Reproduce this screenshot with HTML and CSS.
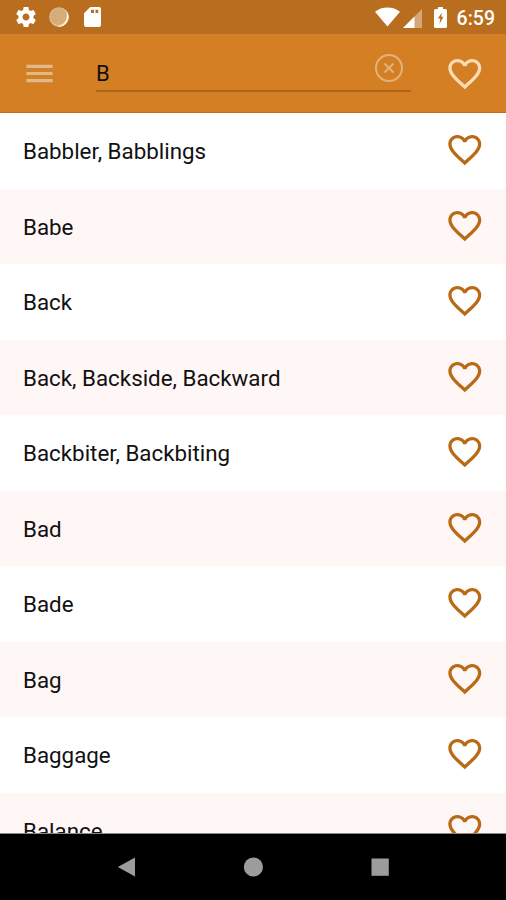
FILE: index.html
```
<!DOCTYPE html>
<html lang="en">
<head>
<meta charset="utf-8">
<title>Dictionary</title>
<link rel="stylesheet" href="styles.css">
</head>
<body>
<svg class="defs" width="0" height="0" aria-hidden="true">
  <symbol id="heart" viewBox="0 0 24 24"><path d="M16.5 3c-1.74 0-3.41.81-4.5 2.09C10.91 3.81 9.24 3 7.5 3 4.42 3 2 5.42 2 8.5c0 3.78 3.4 6.86 8.55 11.54L12 21.35l1.45-1.32C18.6 15.36 22 12.28 22 8.5 22 5.42 19.58 3 16.5 3zm-4.4 15.55l-.1.1-.1-.1C7.14 14.24 4 11.39 4 8.5 4 6.5 5.5 5 7.5 5c1.54 0 3.04.99 3.57 2.36h1.87C13.46 5.99 14.96 5 16.5 5c2 0 3.5 1.5 3.5 3.5 0 2.89-3.14 5.74-7.9 10.05z"/></symbol>
</svg>
<div class="screen">
  <div class="status">
    <div class="status-left">
      <svg width="24" height="24" viewBox="0 0 24 24"><path d="M19.43 12.98c.04-.32.07-.64.07-.98s-.03-.66-.07-.98l2.11-1.65c.19-.15.24-.42.12-.64l-2-3.46c-.12-.22-.39-.3-.61-.22l-2.49 1c-.52-.4-1.08-.73-1.69-.98l-.38-2.65C14.46 2.18 14.25 2 14 2h-4c-.25 0-.46.18-.49.42l-.38 2.65c-.61.25-1.17.59-1.69.98l-2.49-1c-.23-.09-.49 0-.61.22l-2 3.46c-.13.22-.07.49.12.64l2.11 1.65c-.04.32-.07.65-.07.98s.03.66.07.98l-2.11 1.65c-.19.15-.24.42-.12.64l2 3.46c.12.22.39.3.61.22l2.49-1c.52.4 1.08.73 1.69.98l.38 2.65c.03.24.24.42.49.42h4c.25 0 .46-.18.49-.42l.38-2.65c.61-.25 1.17-.59 1.69-.98l2.49 1c.23.09.49 0 .61-.22l2-3.46c.12-.22.07-.49-.12-.64l-2.11-1.65zM12 15.5c-1.93 0-3.5-1.57-3.5-3.5s1.57-3.5 3.5-3.5 3.5 1.57 3.5 3.5-1.57 3.5-3.5 3.5z"/></svg>
      <svg width="20" height="20" viewBox="0 0 20 20"><circle cx="10" cy="10" r="9.800" fill="#e2c097"/><circle cx="9.500" cy="9.500" r="8.500" fill="#d6ad79"/><path fill="#fff4e4" d="M17.500 4A9.800 9.800 0 0 1 8 19.600Q14.500 18 16.800 13.500Q18.800 9 17.500 4z"/></svg>
      <svg width="17" height="20" viewBox="0 0 17 20"><path fill-rule="evenodd" d="M6.300 0H15a2 2 0 0 1 2 2V18a2 2 0 0 1-2 2H2a2 2 0 0 1-2-2V6.300zM7 2.800V6H10V2.800zM11.500 2.800V6H14.200V2.800z"/></svg>
    </div>
    <div class="status-right">
      <svg class="wifi" width="25" height="20" viewBox="0 0 26 20"><path d="M0 4.500Q5.500 0 13 0T26 4.500L13 20z"/></svg>
      <svg class="signal" width="19" height="19" viewBox="0 0 19 19"><path opacity=".4" d="M19 0V19H0z"/><path d="M11.500 7.500V19H0z"/></svg>
      <svg class="battery" width="13" height="21" viewBox="0 0 13 21"><path fill-rule="evenodd" d="M4 0h5v2h2.500Q13 2 13 3.500v16Q13 21 11.500 21h-10Q0 21 0 19.500v-16Q0 2 1.500 2H4zM8 5.500L3.800 11.500H6.300L5.500 17L9.500 9.800H7.200z"/></svg>
      <span class="clock">6:59</span>
    </div>
  </div>
  <header class="toolbar">
    <svg class="menu" width="35" height="35" viewBox="0 0 24 24"><path d="M3 18h18v-2.200H3zM3 13.100h18v-2.200H3zM3 6v2.200h18V6z"/></svg>
    <div class="search">
      <span class="query">B</span>
      <svg class="clear" width="30" height="30" viewBox="0 0 30 30"><circle cx="15" cy="15" r="13"/><path d="M10.500 10.500l9 9M19.500 10.500l-9 9"/></svg>
    </div>
    <svg class="heart"><use href="#heart"/></svg>
  </header>
  <main class="list">
    <div class="row"><span>Babbler, Babblings</span><svg class="heart"><use href="#heart"/></svg></div>
    <div class="row"><span>Babe</span><svg class="heart"><use href="#heart"/></svg></div>
    <div class="row"><span>Back</span><svg class="heart"><use href="#heart"/></svg></div>
    <div class="row"><span>Back, Backside, Backward</span><svg class="heart"><use href="#heart"/></svg></div>
    <div class="row"><span>Backbiter, Backbiting</span><svg class="heart"><use href="#heart"/></svg></div>
    <div class="row"><span>Bad</span><svg class="heart"><use href="#heart"/></svg></div>
    <div class="row"><span>Bade</span><svg class="heart"><use href="#heart"/></svg></div>
    <div class="row"><span>Bag</span><svg class="heart"><use href="#heart"/></svg></div>
    <div class="row"><span>Baggage</span><svg class="heart"><use href="#heart"/></svg></div>
    <div class="row"><span>Balance</span><svg class="heart"><use href="#heart"/></svg></div>
  </main>
  <nav class="navbar">
    <svg width="20" height="20" viewBox="0 0 20 20"><path d="M1.800 10L19 .5V19.500z"/></svg>
    <svg width="20" height="20" viewBox="0 0 20 20"><circle cx="10.400" cy="10" r="9.600"/></svg>
    <svg width="20" height="20" viewBox="0 0 20 20"><path d="M1.500 1.500h17.300v17.300H1.500z"/></svg>
  </nav>
</div>
</body>
</html>
```

FILE: styles.css
```
* { box-sizing: border-box; }
body { margin: 0; font-family: Roboto, "Liberation Sans", sans-serif; color: #111; }
svg { display: block; flex: none; }
.defs { display: none; }
.screen { width: 506px; height: 900px; display: flex; flex-direction: column; overflow: hidden; background: #fff; }

.status { flex: none; height: 34px; padding: 0 11px 0 14px; display: flex; justify-content: space-between; background: #b86e1e; fill: #fff; color: #fff; }
.status-left, .status-right { display: flex; align-items: center; }
.status-left { gap: 11px; }
.status-left svg:nth-child(3) { margin-left: 4px; }
.signal { margin: 2px 12px 0 3px; }
.battery { margin-right: 10px; }
.clock { font-size: 19.5px; font-weight: 500; line-height: 34px; padding-top: 3px; }

.toolbar { flex: none; height: 79px; padding: 0 22px; display: flex; align-items: center; background: #d57f24; border-bottom: 1px solid #c86c13; }
.menu { margin-top: 1px; fill: #dfb88c; }
.search { width: 315px; height: 44px; margin: -7px 0 0 39px; padding-right: 7.5px; display: flex; align-items: center; justify-content: space-between; border-bottom: 2px solid #ad671b; }
.query { padding-top: 10px; font-size: 22px; line-height: 28px; }
.clear { fill: none; stroke: #e2b27b; stroke-width: 2; margin-top: -2px; }
.heart { width: 39.6px; height: 39.6px; fill: #b96a16; }
.toolbar .heart { margin: 1px -.5px 0 auto; fill: #fbdcb4; }

.list { flex: 1; min-height: 0; overflow: hidden; }
.row { height: 75.5px; padding: 0 21.5px 0 23px; display: flex; align-items: center; justify-content: space-between; font-size: 22.35px; }
.row:nth-child(even) { background: #fff6f6; }
.row span { padding-top: 1px; }
.row .heart { margin-top: -1px; }

.navbar { flex: none; height: 67px; padding: 0 116px; display: flex; align-items: center; justify-content: space-between; background: #000; fill: #9c9c9c; border-top: 1px solid #888; }
```
